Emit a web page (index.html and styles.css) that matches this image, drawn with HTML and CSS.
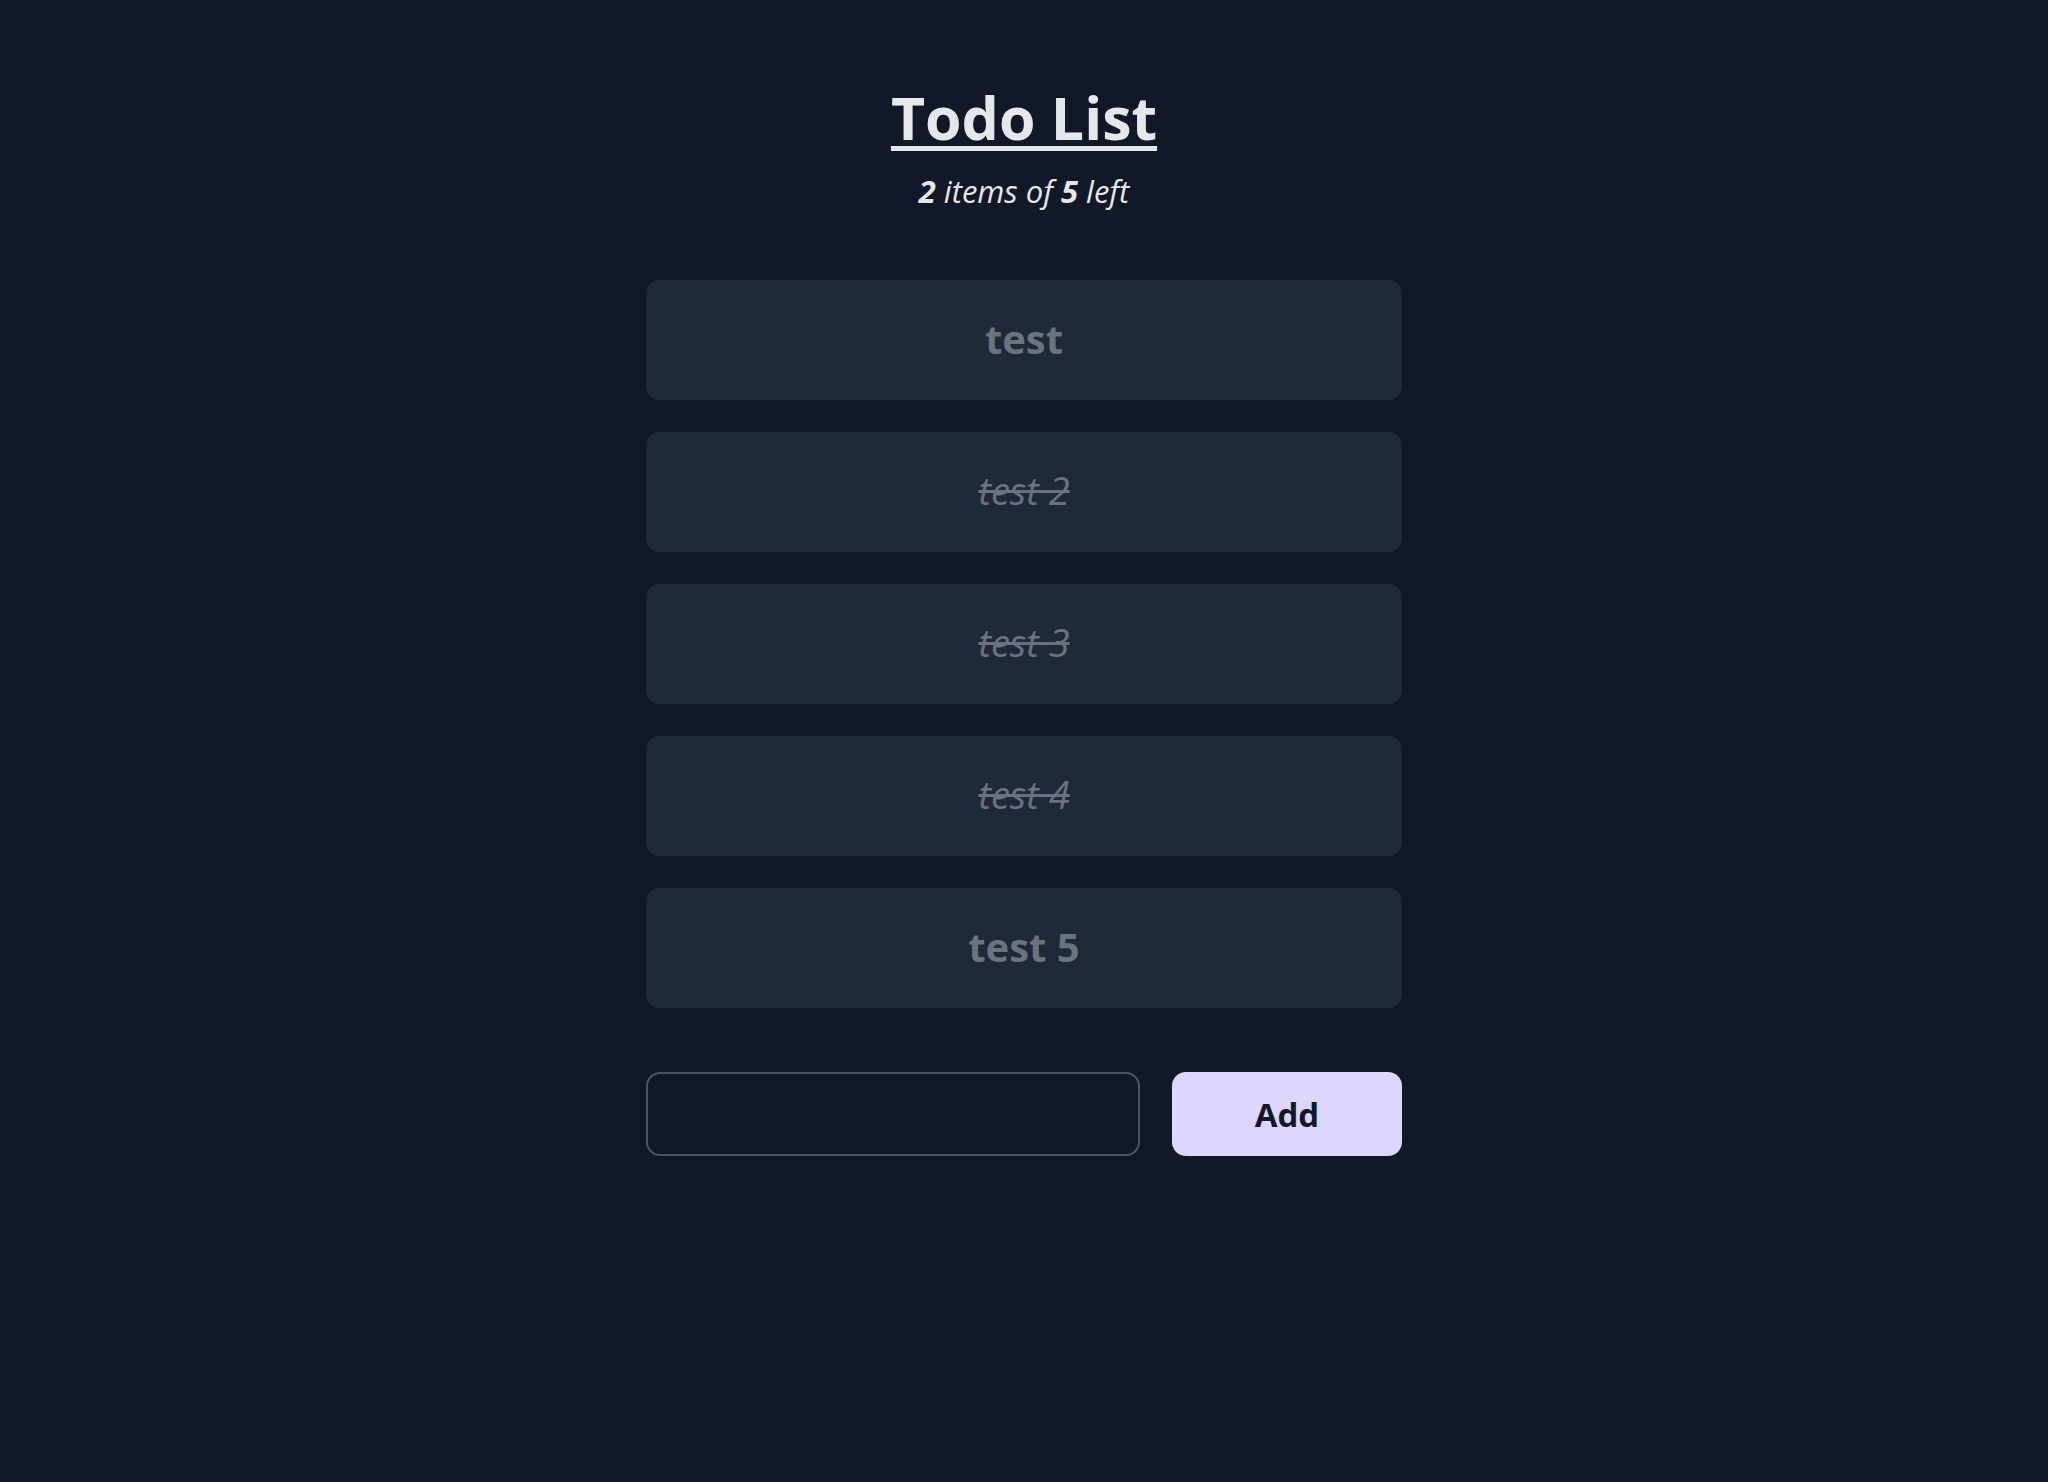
FILE: index.html
```html
<!DOCTYPE html>
<html lang="en">
<head>
<meta charset="utf-8">
<title>Todo List</title>
<link rel="stylesheet" href="styles.css">
</head>
<body>
<main class="app">
  <h1 class="title">Todo List</h1>
  <p class="summary"><b>2</b> items of <b>5</b> left</p>
  <ul class="todos">
    <li class="todo">test</li>
    <li class="todo done">test 2</li>
    <li class="todo done">test 3</li>
    <li class="todo done">test 4</li>
    <li class="todo">test 5</li>
  </ul>
  <form class="add-form">
    <input class="add-input" type="text">
    <button class="add-btn" type="button">Add</button>
  </form>
</main>
</body>
</html>
```

FILE: styles.css
```css
html, body {
  margin: 0;
  padding: 0;
  background: #111827;
  min-height: 100%;
}
body {
  font-family: "Open Sans", "Noto Sans", sans-serif;
  color: #e5e7eb;
  height: 1482px;
}
.app {
  width: 756px;
  margin: 0 auto;
  padding-top: 80px;
  display: flex;
  flex-direction: column;
  align-items: stretch;
}
.title {
  margin: 0;
  text-align: center;
  font-size: 59px;
  font-weight: 700;
  line-height: 74px;
  text-decoration: underline;
  text-decoration-thickness: 5px;
  text-underline-offset: 6px;
  color: #e5e7eb;
}
.summary {
  margin: 16px 0 0;
  text-align: center;
  font-size: 31px;
  font-style: italic;
  line-height: 42px;
  color: #e5e7eb;
}
.summary b { font-weight: 700; }
.todos {
  list-style: none;
  margin: 68px 0 0;
  padding: 0;
  display: flex;
  flex-direction: column;
  gap: 32px;
}
.todo {
  height: 120px;
  box-sizing: border-box;
  padding-bottom: 4px;
  background: #1f2937;
  border-radius: 14px;
  display: flex;
  align-items: center;
  justify-content: center;
  font-size: 40px;
  font-weight: 700;
  color: #6b7280;
}
.todo.done {
  font-size: 38px;
  font-weight: 400;
  font-style: italic;
  text-decoration: line-through;
  text-decoration-thickness: 3px;
}
.add-form {
  margin-top: 64px;
  display: flex;
  gap: 32px;
}
.add-input {
  flex: 1;
  height: 84px;
  box-sizing: border-box;
  background: #111827;
  border: 2px solid #4b5563;
  border-radius: 14px;
  color: #e5e7eb;
  font-family: inherit;
  font-size: 30px;
  padding: 0 20px;
  outline: none;
}
.add-btn {
  width: 230px;
  height: 84px;
  border: none;
  border-radius: 14px;
  background: #ddd6fe;
  color: #111827;
  font-family: inherit;
  font-size: 33px;
  font-weight: 700;
}
```
